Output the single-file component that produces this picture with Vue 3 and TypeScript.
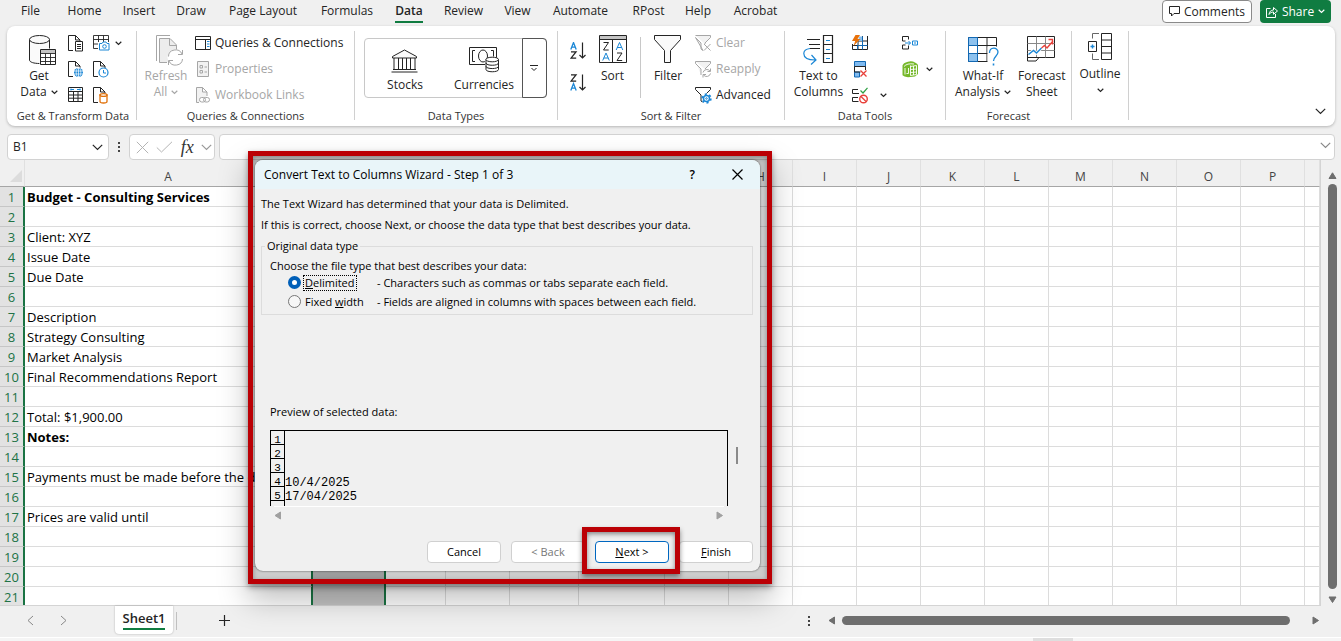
<script setup lang="ts">
import { h, ref } from 'vue'

interface IconDef { w: number; h: number; body: string }

const doc = '<path d="M5 15.5H.5V.5h7l4.5 4.5v2.5M7.5.5V5H12" fill="none"/>'

const icons: Record<string, IconDef> = {
  getData: { w: 28, h: 31, body: '<path d="M.5 4.5v20.5c0 2.200 4.500 3.500 10 3.500s10-1.300 10-3.500V4.500" fill="#fafafa"/><ellipse cx="10.500" cy="4.500" rx="10" ry="4" fill="#fafafa"/><path d="M10.500 13.500h17v16.500h-17z" fill="#fff" stroke="none"/><path d="M11.500 14.500h15v15h-15z" fill="#fff"/><path d="M12 15h14v3H12z" fill="#c4c4c4" stroke="none"/><path d="M11.500 18.500h15M11.500 22.500h15M11.500 26.500h15M16.500 18.500v11M21.500 18.500v11" stroke-width=".9"/>' },
  textFile: { w: 16, h: 17, body: doc + '<path d="M7.500 6.500h7v9.500h-7z" fill="#fff"/><path d="M9 9.500h4M9 11.500h4M9 13.500h4"/>' },
  web: { w: 16, h: 17, body: doc + '<circle cx="10.500" cy="11.500" r="5.300" fill="#fff" stroke="none"/><circle cx="10.500" cy="11.500" r="4.500" fill="#1b87d6" stroke="none"/><path d="M6 10h9M6 13h9M10.500 7v9" stroke="#fff" stroke-width=".7"/><ellipse cx="10.500" cy="11.500" rx="2.300" ry="4.300" stroke="#fff" stroke-width=".7"/>' },
  rangeTable: { w: 16, h: 16, body: '<path d="M.5.5h14v14H.5zM.5 4.500h14M.5 8h14M.5 11.200h14M5.500 4.500v10M10 4.500v10"/><path d="M2.500 2.500h3.500M9 2.500h3.500M3 1.500v2M12 1.500v2" stroke="#1b87d6"/>' },
  picture: { w: 17, h: 16, body: '<path d="M.5.5h15v13H.5zM.5 4.500h15M.5 9h15M5.500.5v13M10.500.5v13" stroke-width=".9"/><path d="M5 7h11.500v9H5z" fill="#fff" stroke="none"/><path d="M6.500 8.500h2.500l1-1.500h3l1 1.500h2V15H6.500z" fill="#fff" stroke="#1b87d6"/><circle cx="11.500" cy="11.500" r="1.800" stroke="#1b87d6"/>' },
  recent: { w: 17, h: 17, body: doc + '<circle cx="10.500" cy="11.500" r="4.500" fill="#fff" stroke="#1b87d6" stroke-width="1.200"/><path d="M10.500 9v3h2.500" stroke="#1b87d6"/>' },
  existing: { w: 17, h: 17, body: doc + '<path d="M7 8v6.500c0 1 1.500 1.500 3.500 1.500s3.500-.5 3.500-1.500V8z" fill="#fff" stroke="#e0720c" stroke-width="1.300"/><ellipse cx="10.500" cy="8" rx="3.500" ry="1.400" fill="#fff" stroke="#e0720c" stroke-width="1.300"/>' },
  refresh: { w: 28, h: 31, body: '<path d="M.5 26V.5h13.500" fill="none"/><path d="M11 27.500H3.500v-24h10.500l6.500 6.500v4.500" fill="#ededed"/><path d="M13.500 3.500V10.500h7"/><circle cx="19.500" cy="22.500" r="8" fill="#fff" stroke="none"/><path d="M12.500 21.500a7 6.500 0 0 1 13.500-2.500M26.500 15v4.500h-4.500M26.500 24a7 6.500 0 0 1-13.500 2M12.500 30v-4.500h4.500"/>' },
  queries: { w: 16, h: 14, body: '<path d="M.5.5h15v13H.5zM.5 3.500h15M10.500 3.500v10"/><path d="M12 5.500h2.500M12 8h2.500M12 10.500h2.500" stroke="#1b87d6"/>' },
  properties: { w: 16, h: 16, body: '<path d="M2.500.5h11v15h-11z" fill="#f2f2f2"/><path d="M5 4.500h2.500V7H5zM5 9.500h2.500V12H5zM9.500 6h2.500M9.500 11h2.500"/>' },
  links: { w: 16, h: 16, body: '<path d="M4 15.500H1.500V.5h6l4.500 4.500v4M7.500.5V5H12"  fill="#f2f2f2"/><rect x="4.500" y="10.500" width="6" height="4.500" rx="2.200" fill="#fff"/><rect x="8.500" y="10.500" width="6" height="4.500" rx="2.200"/>' },
  stocks: { w: 28, h: 24, body: '<path d="M1.500 7.500L13.500 1l12 6.500v1.500h-24z" fill="#fafafa"/><path d="M3 9v11.500M7.500 9v11.500M11.500 9v11.500M15.500 9v11.500M19.500 9v11.500M24 9v11.500M2 20.500h23v0M.5 23h26"/>' },
  currencies: { w: 31, h: 26, body: '<path d="M.5.5h27v17H.5z"/><path d="M6 3.500H3.500v11H6M22 3.500h2.500v6"/><ellipse cx="14" cy="9" rx="4.500" ry="6" /><path d="M16 12h14v13H16z" fill="#fff" stroke="none"/><path d="M17 12.500v10c0 3 12.500 3 12.500 0v-10" fill="#fff"/><ellipse cx="23.200" cy="12.500" rx="6.300" ry="2.300" fill="#fff"/><path d="M17 16c0 3 12.500 3 12.500 0M17 19.300c0 3 12.500 3 12.500 0"/>' },
  more: { w: 9, h: 7, body: '<path d="M0 .5h8M1.500 3l2.500 2.500L6.500 3"/>' },
  azDown: { w: 17, h: 18, body: '<g stroke-width="1.300"><path d="M.8 7.500L3.500.5l2.700 7M1.700 5.200h3.600" stroke="#1b87d6"/><path d="M1 9.800h5l-5 6.400h5.200"/></g><path d="M12.500.5v15.500M9.500 13l3 3 3-3" stroke-width="1.200"/>' },
  zaDown: { w: 17, h: 18, body: '<g stroke-width="1.300"><path d="M1 .8h5L1 7.200h5.200"/><path d="M.8 16.500l2.700-7 2.700 7M1.700 14.200h3.600" stroke="#1b87d6"/></g><path d="M12.500.5v15.500M9.500 13l3 3 3-3" stroke-width="1.200"/>' },
  sort: { w: 28, h: 29, body: '<path d="M.5.5h27v27H.5z"/><path d="M1 1h26v3.500H1z" fill="#c4c4c4" stroke="none"/><path d="M.5 4.500h27M13.500 4.500v23"/><path d="M4.500 7.500h5l-5 7.500h5.200M18 18h5l-5 7.500h5.200"/><path d="M3.700 25.500L7 18l3.300 7.500M4.700 23h4.500M17.200 15l3.300-7.500 3.300 7.500M18.200 12.500h4.500" stroke="#1b87d6"/>' },
  filter: { w: 28, h: 29, body: '<path d="M.5.5h26v4l-10 11v12h-6v-12L.5 4.500z" fill="#fafafa"/>' },
  clear: { w: 17, h: 17, body: '<path d="M.5.5h15v2L10 8v1M8 15.500L6 14V8L.5 2.500z" fill="#f2f2f2"/><path d="M9 9l6.500 6.500M15.500 9L9 15.500" />' },
  reapply: { w: 17, h: 17, body: '<path d="M.5.5h15v2L10 8M6 14V8L.5 2.500V.5" fill="#f2f2f2"/><path d="M8 11.500a4 4 0 0 1 7-1.500M15.500 7.500V10.500h-3M15.500 12.500a4 4 0 0 1-7 1.500M8 16.500v-3h3"/>' },
  advanced: { w: 17, h: 17, body: '<path d="M7.500 15L6 14V8L.5 2.500V.5h15v2L11.500 6.500"/><circle cx="11.500" cy="11.500" r="3" stroke="#1b87d6" stroke-width="1.500"/><circle cx="11.500" cy="11.500" r="4.400" stroke="#1b87d6" stroke-width="1.600" stroke-dasharray="2.100 2.500"/><circle cx="11.500" cy="11.500" r=".8" stroke="#1b87d6"/>' },
  textToColumns: { w: 31, h: 31, body: '<path d="M4 4.500h13M6 9.500h11M7 13.500h10"/><path d="M20.500 .5h9v27h-9zM20.500 9.500h9M20.500 18.500h9" stroke-width="1.200"/><path d="M23 5.500h4M23 14.500h4M23 23.500h4M7 13.500C3 14 .8 16 .8 18.500c0 4.500 5 6.500 11.500 6.500M8.500 20l4.500 5-5 4.500" stroke="#1b87d6" stroke-width="1.200"/>' },
  flash: { w: 17, h: 17, body: '<path d="M6 14.500V6M.5 9v5.500M15.500 1v13.500H.5M10.500 1v13.500M6 6h9.500M1 10.500h14.500"/><path d="M7 1.500h3.500V6h-5v4.500" stroke="none" fill="#8cc1ee"/><path d="M15.500 10.500H5.500v4M10.500 1.500v13" stroke="#1268b3"/><path d="M3.500 0h4.500L5.500 4h3L1.500 11l1.700-5H0z" fill="#e8710a" stroke="none"/>' },
  duplicates: { w: 17, h: 17, body: '<path d="M2.500.5h11v5h-11zM2.500 11h5v5h-5z" fill="#7fbaf0" stroke="#1268b3"/><path d="M2.500 5.500h11v3.500M2.500 5.500v5.500h6"/><path d="M8.500 9.500l6 6M14.500 9.500l-6 6" stroke="#e8403a" stroke-width="1.300"/>' },
  validation: { w: 17, h: 17, body: '<path d="M6 2.500H.5v4H7M6 10.500H.5v4h6"/><path d="M8.500 3.500l2.500 2.500L15.500.8" stroke="#2ea043" stroke-width="1.200"/><circle cx="11.500" cy="12" r="3.800" stroke="#e8403a" stroke-width="1.400"/><path d="M9 9.500l5 5" stroke="#e8403a" stroke-width="1.300"/>' },
  consolidate: { w: 17, h: 15, body: '<path d="M6.500 3.500V.5h-6v4.500h3M6.500 9.500v3.500h-6V9h3"/><path d="M10.500 5h5v4h-5z M12 7h2" stroke="#1b87d6"/><path d="M3 7h5.500M6.500 5l2 2-2 2" stroke="#1b87d6"/>' },
  model: { w: 17, h: 17, body: '<path d="M.5 4.500Q1 2 6 .7q4-1 7 .8 2.500 1 3 2.500v9L13 15.500l-7 .7q-4-.5-5.500-2z" fill="#76b82a" stroke="none"/><path d="M2 5.500Q5 2 12 3M3 7v6.500M8.500 4.500v10M8.500 5.500L14.500 4.500v9l-6 1M11.500 5v9M8.500 8.500l6-.5M8.500 11.500l6-.5" stroke="#fff" stroke-width=".9"/><path d="M4.500 12.500h2V7" stroke="#fff" stroke-width=".9"/>' },
  whatIf: { w: 31, h: 30, body: '<path d="M.5.5h28v24H.5z" fill="#fff"/><path d="M.5 8.500h28M.5 16.500h28M9.500.5v24M19 .5v24"/><path d="M.5.5h9v8h-9zM.5 16.500h9v8h-9zM.5 8.500h9v8h-9z" fill="#8cc1ee" stroke="#1268b3"/><path d="M1 9h8v7H1z" fill="#fff" stroke="none"/><path d="M19.500 9.500h11V30h-11z" fill="#fff" stroke="none"/><path d="M21.500 16c0-6.500 8.500-6 8.500-1 0 4-4.500 4.500-4.500 9" stroke="#1b87d6" stroke-width="1.300"/><path d="M25.500 26.500v2" stroke="#1b87d6" stroke-width="1.600"/>' },
  forecastSheet: { w: 29, h: 28, body: '<path d="M.5.5h27v21H12l-3 3.500H.5z"/><path d="M.5 7.500h27M.5 14.500h27M9.500.5v21M18.500 .5v21" stroke="#888"/><path d="M.5 21.500H12"/><path d="M1.500 18.500l5-4 3 2.500 5-5" stroke="#fff" stroke-width="3"/><path d="M1.500 18.500l5-4 3 2.500 5-5" stroke="#1b87d6" stroke-width="1.400"/><path d="M14.500 12l3-2.500 2.500 2.500 6-7M21.500 3.500h4v5" stroke="#e8403a" stroke-width="1.400"/>' },
  outline: { w: 25, h: 28, body: '<path d="M13.500.5h10v26h-10zM13.500 7h10M13.500 13.500h10M13.500 20h10"/><path d="M11 .5H4.500v5M11 26.500H4.500v-6" stroke="#666"/><path d="M.5 8.500h8v10h-8z"/><path d="M2.500 13.500h4M4.500 11.500v4" stroke="#1b87d6" stroke-width="1.400"/>' },
  chev: { w: 7, h: 5, body: '<path d="M.7.8L3.500 3.500 6.300.8" stroke-width="1.200"/>' },
  chevBig: { w: 11, h: 7, body: '<path d="M.8.8L5.500 5.500 10.200.8" stroke-width="1.200"/>' },
  comment: { w: 11, h: 11, body: '<path d="M.5.5h10v7H5L2.500 10V7.500h-2z"/>' },
  share: { w: 12, h: 12, body: '<path d="M4.500 2.500h-4v9h9V8M3 8.500c.3-3 2-4.500 4.500-4.500V1.500L11.500 5 7.500 8.300V6C5.500 6 4 6.800 3 8.500z"/>' },
  cross: { w: 13, h: 13, body: '<path d="M.8.8l11.400 11.400M12.200.8L.8 12.200"/>' },
  check: { w: 17, h: 12, body: '<path d="M.8 6.500L5.500 11 16 .8"/>' },
  close: { w: 11, h: 11, body: '<path d="M.5.5l10 10M10.500.5l-10 10" stroke-width="1.200"/>' },
  prev: { w: 7, h: 11, body: '<path d="M6 1L1 5.500 6 10"/>' },
  next: { w: 7, h: 11, body: '<path d="M1 1l5 4.500L1 10"/>' },
  plus: { w: 11, h: 11, body: '<path d="M5.500 0v11M0 5.500h11" stroke-width="1.200"/>' },
  triUp: { w: 9, h: 8, body: '<path d="M4.500.8L8 6.500H1z" fill="currentColor" stroke-linejoin="round"/>' },
  triDown: { w: 9, h: 8, body: '<path d="M4.500 6.500L1 1h7z" fill="currentColor" stroke-linejoin="round"/>' },
  triLeft: { w: 8, h: 9, body: '<path d="M1 4.500L6.500 1v7z" fill="currentColor" stroke-linejoin="round"/>' },
  triRight: { w: 8, h: 9, body: '<path d="M6.500 4.500L1 1v7z" fill="currentColor" stroke-linejoin="round"/>' },
  corner: { w: 12, h: 12, body: '<path d="M12 0v12H0z" fill="#dcdcdc" stroke="none"/>' },
}

const Icon = (props: { name: string }) => {
  const icon = icons[props.name]
  return h('svg', {
    width: icon.w, height: icon.h, viewBox: `0 0 ${icon.w} ${icon.h}`,
    fill: 'none', stroke: 'currentColor', 'aria-hidden': 'true', innerHTML: icon.body,
  })
}
Icon.props = ['name']

const tabs = ['File', 'Home', 'Insert', 'Draw', 'Page Layout', 'Formulas', 'Data', 'Review', 'View', 'Automate', 'RPost', 'Help', 'Acrobat']
const columns = ['A', 'B', 'C', 'D', 'E', 'F', 'G', 'H', 'I', 'J', 'K', 'L', 'M', 'N', 'O', 'P', '']
const covered = ['B', 'C', 'D', 'E', 'F', 'G']
const sheet: Record<number, string> = {
  1: 'Budget - Consulting Services', 3: 'Client: XYZ', 4: 'Issue Date', 5: 'Due Date', 7: 'Description',
  8: 'Strategy Consulting', 9: 'Market Analysis', 10: 'Final Recommendations Report', 12: 'Total: $1,900.00',
  13: 'Notes:', 15: 'Payments must be made before the du', 17: 'Prices are valid until',
}
const boldRows = [1, 13]
const preview = [
  { n: '1', text: '' }, { n: '2', text: '' }, { n: '3', text: '' },
  { n: '4', text: '10/4/2025' }, { n: '5', text: '17/04/2025' }, { n: '', text: '' },
]
const fileType = ref('delimited')
const cellName = ref('B1')
const formula = ref('')
</script>

<template>
  <div class="app">
    <header class="menu">
      <nav class="tabs">
        <button v-for="t in tabs" :key="t" class="tab" :class="{ active: t === 'Data' }"><span>{{ t }}</span></button>
      </nav>
      <div class="actions">
        <button class="comments"><Icon name="comment" />Comments</button>
        <button class="share"><Icon name="share" />Share<Icon name="chev" /></button>
      </div>
    </header>

    <section class="ribbon">
      <div class="group g-get">
        <div class="body">
          <button class="big"><Icon name="getData" /><span>Get</span><span>Data <Icon name="chev" /></span></button>
          <div class="stack">
            <button class="small" aria-label="From text"><Icon name="textFile" /></button>
            <button class="small" aria-label="From web"><Icon name="web" /></button>
            <button class="small" aria-label="From table"><Icon name="rangeTable" /></button>
          </div>
          <div class="stack">
            <button class="small" aria-label="From picture"><Icon name="picture" /><Icon name="chev" /></button>
            <button class="small" aria-label="Recent sources"><Icon name="recent" /></button>
            <button class="small" aria-label="Existing connections"><Icon name="existing" /></button>
          </div>
        </div>
        <div class="caption">Get &amp; Transform Data</div>
      </div>

      <div class="group g-queries">
        <div class="body">
          <button class="big dim"><Icon name="refresh" /><span>Refresh</span><span>All <Icon name="chev" /></span></button>
          <div class="stack">
            <button class="small"><Icon name="queries" />Queries &amp; Connections</button>
            <button class="small dim"><Icon name="properties" />Properties</button>
            <button class="small dim"><Icon name="links" />Workbook Links</button>
          </div>
        </div>
        <div class="caption">Queries &amp; Connections</div>
      </div>

      <div class="group g-types">
        <div class="body">
          <div class="gallery">
            <button class="type"><Icon name="stocks" /><span>Stocks</span></button>
            <button class="type"><Icon name="currencies" /><span>Currencies</span></button>
            <button class="expand" aria-label="More data types"><Icon name="more" /></button>
          </div>
        </div>
        <div class="caption">Data Types</div>
      </div>

      <div class="group g-sort">
        <div class="body">
          <div class="orders">
            <button class="small" aria-label="Sort A to Z"><Icon name="azDown" /></button>
            <button class="small" aria-label="Sort Z to A"><Icon name="zaDown" /></button>
          </div>
          <button class="big"><Icon name="sort" /><span>Sort</span></button>
          <i class="rule"></i>
          <button class="big"><Icon name="filter" /><span>Filter</span></button>
          <div class="stack">
            <button class="small dim"><Icon name="clear" />Clear</button>
            <button class="small dim"><Icon name="reapply" />Reapply</button>
            <button class="small"><Icon name="advanced" />Advanced</button>
          </div>
        </div>
        <div class="caption">Sort &amp; Filter</div>
      </div>

      <div class="group g-tools">
        <div class="body">
          <button class="big"><Icon name="textToColumns" /><span>Text to</span><span>Columns</span></button>
          <div class="stack">
            <button class="small" aria-label="Flash fill"><Icon name="flash" /></button>
            <button class="small" aria-label="Remove duplicates"><Icon name="duplicates" /></button>
            <button class="small wide" aria-label="Data validation"><Icon name="validation" /><Icon name="chev" /></button>
          </div>
          <div class="stack">
            <button class="small" aria-label="Consolidate"><Icon name="consolidate" /></button>
            <button class="small" aria-label="Data model"><Icon name="model" /><Icon name="chev" /></button>
          </div>
        </div>
        <div class="caption">Data Tools</div>
      </div>

      <div class="group g-forecast">
        <div class="body">
          <button class="big"><Icon name="whatIf" /><span>What-If</span><span>Analysis <Icon name="chev" /></span></button>
          <button class="big"><Icon name="forecastSheet" /><span>Forecast</span><span>Sheet</span></button>
        </div>
        <div class="caption">Forecast</div>
      </div>

      <div class="group g-outline">
        <div class="body">
          <button class="big"><Icon name="outline" /><span>Outline</span><span><Icon name="chev" /></span></button>
        </div>
      </div>
      <button class="collapse" aria-label="Collapse ribbon"><Icon name="chevBig" /></button>
    </section>

    <section class="formula-bar">
      <div class="name-box">
        <input v-model="cellName" aria-label="Name box"><Icon name="chevBig" />
      </div>
      <div class="dots"><i></i><i></i><i></i></div>
      <div class="fx-box">
        <button aria-label="Cancel entry"><Icon name="cross" /></button>
        <button aria-label="Enter"><Icon name="check" /></button>
        <button class="fx">fx</button>
        <Icon name="chevBig" />
      </div>
      <div class="formula"><input v-model="formula" aria-label="Formula bar"><Icon name="chevBig" /></div>
    </section>

    <main class="work">
      <div class="grid-wrap">
        <table class="sheet">
          <colgroup>
            <col class="c-row"><col v-for="(c, i) in columns" :key="i" :class="'c-' + c.toLowerCase()">
          </colgroup>
          <thead>
            <tr><th class="all"><Icon name="corner" /></th><th v-for="(c, i) in columns" :key="i">{{ covered.includes(c) ? '' : c }}</th></tr>
          </thead>
          <tbody>
            <tr v-for="r in 21" :key="r">
              <th>{{ r }}</th>
              <td v-for="(c, i) in columns" :key="i" :class="{ bold: boldRows.includes(r), picked: c === 'B', first: i === 0 }">{{ i === 0 ? sheet[r] : '' }}</td>
            </tr>
          </tbody>
        </table>
      </div>
      <div class="v-scroll"><Icon name="triUp" /><i></i><Icon name="triDown" /></div>
    </main>

    <footer class="sheet-bar">
      <button class="nav" aria-label="Previous sheet"><Icon name="prev" /></button>
      <button class="nav" aria-label="Next sheet"><Icon name="next" /></button>
      <button class="sheet-tab"><span>Sheet1</span></button>
      <i class="tab-rule"></i>
      <button class="add" aria-label="New sheet"><Icon name="plus" /></button>
      <div class="dots"><i></i><i></i><i></i></div>
      <div class="h-scroll"><Icon name="triLeft" /><i></i><Icon name="triRight" /></div>
    </footer>
    <div class="status"><i></i></div>

    <div class="frame">
      <div class="dialog" role="dialog" aria-labelledby="wizard-title">
        <div class="title">
          <span id="wizard-title">Convert Text to Columns Wizard - Step 1 of 3</span>
          <button class="help">?</button>
          <button class="close" aria-label="Close"><Icon name="close" /></button>
        </div>
        <div class="content">
          <p>The Text Wizard has determined that your data is Delimited.</p>
          <p>If this is correct, choose Next, or choose the data type that best describes your data.</p>
          <fieldset>
            <legend>Original data type</legend>
            <p class="choose">Choose the file type that best describes your data:</p>
            <div class="option">
              <input id="opt-delimited" v-model="fileType" type="radio" name="file-type" value="delimited">
              <label for="opt-delimited" class="focused"><u>D</u>elimited</label>
              <span>- Characters such as commas or tabs separate each field.</span>
            </div>
            <div class="option">
              <input id="opt-fixed" v-model="fileType" type="radio" name="file-type" value="fixed">
              <label for="opt-fixed">Fixed <u>w</u>idth</label>
              <span>- Fields are aligned in columns with spaces between each field.</span>
            </div>
          </fieldset>
          <div class="preview-label">Preview of selected data:</div>
          <div class="preview-row">
            <div class="preview">
              <div v-for="(line, i) in preview" :key="i" class="line"><b>{{ line.n }}</b><span>{{ line.text }}</span></div>
            </div>
            <i class="thumb"></i>
          </div>
          <div class="preview-scroll"><Icon name="triLeft" /><Icon name="triRight" /></div>
          <div class="buttons">
            <button>Cancel</button>
            <button disabled>&lt; Back</button>
            <span class="marked"><button class="primary"><u>N</u>ext &gt;</button></span>
            <button><u>F</u>inish</button>
          </div>
        </div>
      </div>
    </div>
  </div>
</template>

<style>
html, body { height: 100%; margin: 0; }
</style>

<style scoped>
* { box-sizing: border-box; }
.app { position: relative; display: flex; flex-direction: column; height: 100vh; overflow: hidden; background: #f0f0f0; color: #242424; font: 12px/16px "Open Sans", "Noto Sans", sans-serif; }
button { margin: 0; padding: 0; border: 0; background: none; color: inherit; font: inherit; white-space: nowrap; }
input { margin: 0; font: inherit; color: inherit; }
svg { display: block; flex: none; }
i { display: block; }

.menu { display: flex; justify-content: space-between; flex: none; height: 26px; padding: 0 10px 0 7px; }
.tabs { display: grid; grid-template-columns: 47px 61px 48px 56px 88px 80px 44px 65px 43px 83px 53px 46px 69px; }
.tab { height: 23px; padding-top: 3px; display: flex; justify-content: center; }
.tab span { height: 20px; }
.tab.active { font-weight: 600; }
.tab.active span { border-bottom: 2px solid #107c41; }
.actions { display: flex; gap: 8px; }
.comments, .share { display: flex; align-items: center; justify-content: center; gap: 4px; height: 23px; border-radius: 4px; }
.comments { width: 90px; border: 1px solid #8a8a8a; background: #fff; }
.share { width: 71px; background: #107c41; color: #fff; }

.ribbon { display: flex; flex: none; height: 100px; margin: 0 6px 0 7px; padding: 5px 0 6px; background: #fff; border-radius: 8px; box-shadow: 0 1px 3px rgba(0, 0, 0, .25); }
.group { display: flex; flex: none; flex-direction: column; border-right: 1px solid #d0d0d0; }
.g-get { width: 130px; }
.g-queries { width: 218px; }
.g-types { width: 203px; }
.g-sort { width: 227px; }
.g-tools { width: 161px; }
.g-forecast { width: 126px; }
.g-outline { width: 57px; }
.body { display: flex; flex: none; height: 77px; }
.body > * { flex: none; }
.caption { text-align: center; font-size: 11px; color: #333; }
.g-get .caption { padding-left: 3px; }
.big { display: grid; grid-template-rows: 33px 16px 16px; justify-items: center; align-content: start; height: 70px; padding-top: 4px; }
.big span { display: flex; align-items: center; gap: 4px; }
.stack { display: grid; grid-template-rows: repeat(3, 26px); align-content: start; }
.small { display: flex; align-items: center; gap: 4px; height: 24px; }
.dim { color: #a6a6a6; }
.g-get .big { width: 64px; }
.g-get .big > svg { margin-left: 8px; }
.g-get .stack { width: 26px; margin-left: -3px; margin-right: 2px; }
.g-get .small { gap: 5px; }
.g-queries .big { width: 58px; }
.g-queries .big > svg { margin-left: 8px; }
.gallery { display: grid; grid-template-columns: 80px 78px 23px; height: 60px; margin: 7px 10px 0 9px; border: 1px solid #c8c8c8; border-radius: 4px; }
.type { display: grid; grid-template-rows: 29px 16px; justify-items: center; align-items: end; padding-top: 9px; }
.type svg { margin-bottom: 4px; }
.expand { display: flex; align-items: center; justify-content: center; margin: -1px; border: 1px solid #555; border-radius: 0 4px 4px 0; }
.orders { display: grid; grid-template-rows: 32px 32px; align-content: start; width: 40px; padding: 8px 0 0 12px; }
.g-sort .big { width: 29px; }
.rule { width: 1px; height: 61px; margin: 6px 7px 0 13px; background: #c8c8c8; }
.g-sort .rule + .big { width: 40px; margin-right: 7px; }
.g-tools .big { width: 67px; }
.g-tools .stack { width: 50px; }
.g-tools .small { gap: 7px; }
.g-tools .wide { gap: 11px; }
.g-forecast .body { padding-left: 2px; }
.g-forecast .big { width: 70px; padding-top: 6px; grid-template-rows: 31px 16px 16px; }
.g-forecast .big + .big { width: 42px; padding-top: 5px; grid-template-rows: 32px 16px 16px; }
.g-outline .big { width: 56px; padding-top: 2px; }
.collapse { margin: auto 9px 5px auto; }

.formula-bar { display: flex; flex: none; height: 26px; margin: 8px 6px 0 7px; }
.name-box, .fx-box, .formula { display: flex; align-items: center; border: 1px solid #d2d2d2; border-radius: 4px; background: #fff; }
.name-box { width: 102px; padding: 0 5px; }
.name-box input, .formula input { flex: 1; min-width: 0; width: 100%; padding: 0; border: 0; outline: 0; background: none; }
.dots { display: flex; flex-direction: column; align-items: center; justify-content: center; gap: 2px; width: 20px; }
.dots i { width: 2px; height: 2px; background: #444; }
.fx-box { width: 86px; justify-content: space-between; padding: 0 2px 0 6px; color: #b4b4b4; }
.fx { color: #333; font: italic 18px/20px "Liberation Serif", serif; }
.fx-box > svg { color: #999; }
.formula { flex: 1; margin-left: 4px; padding: 0 3px 0 4px; }
.formula svg { margin-bottom: 4px; color: #888; }

.work { display: flex; flex: 1; min-height: 0; }
.grid-wrap { flex: 1; min-width: 0; overflow: hidden; border-bottom: 1px solid #d4d4d4; border-right: 1px solid #d4d4d4; }
.sheet { width: 100%; table-layout: fixed; border-collapse: separate; border-spacing: 0; }
.c-row { width: 25px; }
.c-a { width: 287px; }
.c-b { width: 74px; }
.c-c { width: 60px; }
.c-e { width: 69px; }
.c-f { width: 86px; }
.c-d, .c-g, .c-h, .c-i, .c-j, .c-k, .c-l, .c-m, .c-n, .c-o, .c-p { width: 64px; }
thead th { height: 27px; padding: 7px 0 0; border-bottom: 1px solid #a6a6a6; border-right: 1px solid #e0e0e0; background: #f0f0f0; color: #444; font-weight: 400; }
thead .all { padding: 6px 0 0 10px; }
tbody th { height: 20px; padding: 1px 0 0; border-right: 2px solid #1a7343; border-bottom: 1px solid #c6c6c6; background: #e2e2e2; color: #217346; font-size: 13px; font-weight: 400; line-height: 18px; }
td { height: 20px; padding: 1px 0 0 2px; border-right: 1px solid #dcdcdc; border-bottom: 1px solid #dcdcdc; background: #fff; color: #000; font-size: 13px; line-height: 18px; white-space: nowrap; }
td.first { border-right-color: #1a7343; }
td.picked { border-right: 2px solid #1a7343; border-left: 1px solid #1a7343; border-bottom: 0; background: #c4c4c4; }
.bold { font-weight: 700; }
.v-scroll { display: flex; flex-direction: column; align-items: center; gap: 4px; width: 20px; padding: 12px 0 2px 2px; color: #6e6e6e; }
.v-scroll i { flex: 1; width: 9px; border-radius: 5px; background: #6e6e6e; }
.v-scroll svg:last-child { margin-top: 3px; }

.sheet-bar { display: flex; flex: none; align-items: center; height: 31px; padding: 0 21px 2px 24px; }
.nav { width: 14px; margin-right: 19px; color: #888; }
.nav svg { margin-left: 3px; }
.sheet-tab { width: 58px; height: 28px; margin: 0 3px 2px 25px; border-radius: 0 0 4px 4px; background: #fff; font-size: 13px; font-weight: 600; box-shadow: 0 0 2px rgba(0, 0, 0, .3); }
.sheet-tab span { display: inline-block; height: 21px; line-height: 18px; border-bottom: 2px solid #107c41; }
.tab-rule { width: 1px; height: 18px; background: #c0c0c0; }
.add { margin-left: 42px; }
.sheet-bar .dots { margin-left: auto; }
.h-scroll { display: flex; align-items: center; justify-content: space-between; width: 38%; max-width: 494px; margin-left: 9px; color: #6e6e6e; }
.h-scroll i { flex: 1; height: 9px; margin: 0 22px 0 6px; border-radius: 5px; background: #6e6e6e; }
.status { flex: none; height: 4px; border-top: 1px solid #fff; background: #f5f5f5; }
.status i { width: 40px; height: 3px; margin-left: 77%; background: #dedede; }

.frame { position: absolute; left: 248px; top: 151px; width: 524px; height: 433px; padding: 4px 7px 8px 2px; border: 5px solid #bb0005; box-shadow: 0 3px 6px rgba(0, 0, 0, .4), 0 16px 28px rgba(0, 0, 0, .25), inset 0 2px 5px rgba(0, 0, 0, .35); background: rgba(0, 0, 0, .2); }
.dialog { display: flex; flex-direction: column; height: 100%; border-radius: 8px; background: #f0f0f0; color: #000; box-shadow: 0 0 2px rgba(0, 0, 0, .7); font-size: 11px; line-height: 14px; }
.title { display: flex; flex: none; align-items: center; height: 29px; padding: 0 17px 0 9px; border-radius: 8px 8px 0 0; background: #e9f5f9; font-size: 12px; }
.help { margin-left: auto; font-weight: 600; }
.close { margin-left: 37px; }
.content { display: flex; flex: 1; flex-direction: column; padding: 8px 7px 8px 6px; }
p { margin: 0 0 7px; }
fieldset { margin: 0; padding: 6px 8px 3px; border: 1px solid #dcdcdc; }
legend { margin-left: -5px; padding: 0 2px; }
fieldset .choose { margin: 0; }
.option { display: flex; align-items: center; height: 19px; padding-left: 18px; }
.option input { appearance: none; width: 13px; height: 13px; margin-right: 2px; border: 1px solid #767676; border-radius: 50%; background: #f6f6f6; }
.option input:checked { border: 4px solid #005fb8; background: #fff; }
.option label { padding: 0 1px; border: 1px dotted transparent; }
.option .focused { border-color: #000; }
.option span { margin-left: auto; width: 367px; white-space: nowrap; }
.preview-label { margin: auto 0 11px 9px; }
.preview-row { display: flex; align-items: center; padding-left: 9px; }
.preview { width: 458px; height: 76px; overflow: hidden; border: 1px solid #000; border-bottom: 0; font: 12px/14px "Liberation Mono", monospace; }
.line { display: flex; height: 14px; }
.line b { width: 14px; padding-top: 3px; line-height: 13px; border-right: 1px solid #000; border-bottom: 1px solid #000; text-align: center; font-size: 11px; font-weight: 400; }
.line span { padding-top: 3px; }
.thumb { width: 2px; height: 17px; margin: -26px 0 0 8px; background: #8a8a8a; }
.preview-scroll { display: flex; justify-content: space-between; width: 450px; margin: 0 0 0 13px; padding-top: 4px; border-top: 1px solid #fff; color: #a0a0a0; }
.buttons { display: flex; gap: 10px; justify-content: flex-end; margin-top: 21px; }
.buttons button { width: 74px; height: 22px; border: 1px solid #d0d0d0; border-radius: 4px; background: #fff; line-height: 14px; }
.buttons button:disabled { color: #777; }
.buttons .primary { display: block; border-color: #0067c0; }
.marked { position: relative; }
.marked::after { content: ""; position: absolute; inset: -14px -11px -11px -13px; border: 5px solid #bb0005; box-shadow: 0 3px 5px rgba(0, 0, 0, .45), inset 0 2px 5px rgba(0, 0, 0, .45); pointer-events: none; }
</style>
